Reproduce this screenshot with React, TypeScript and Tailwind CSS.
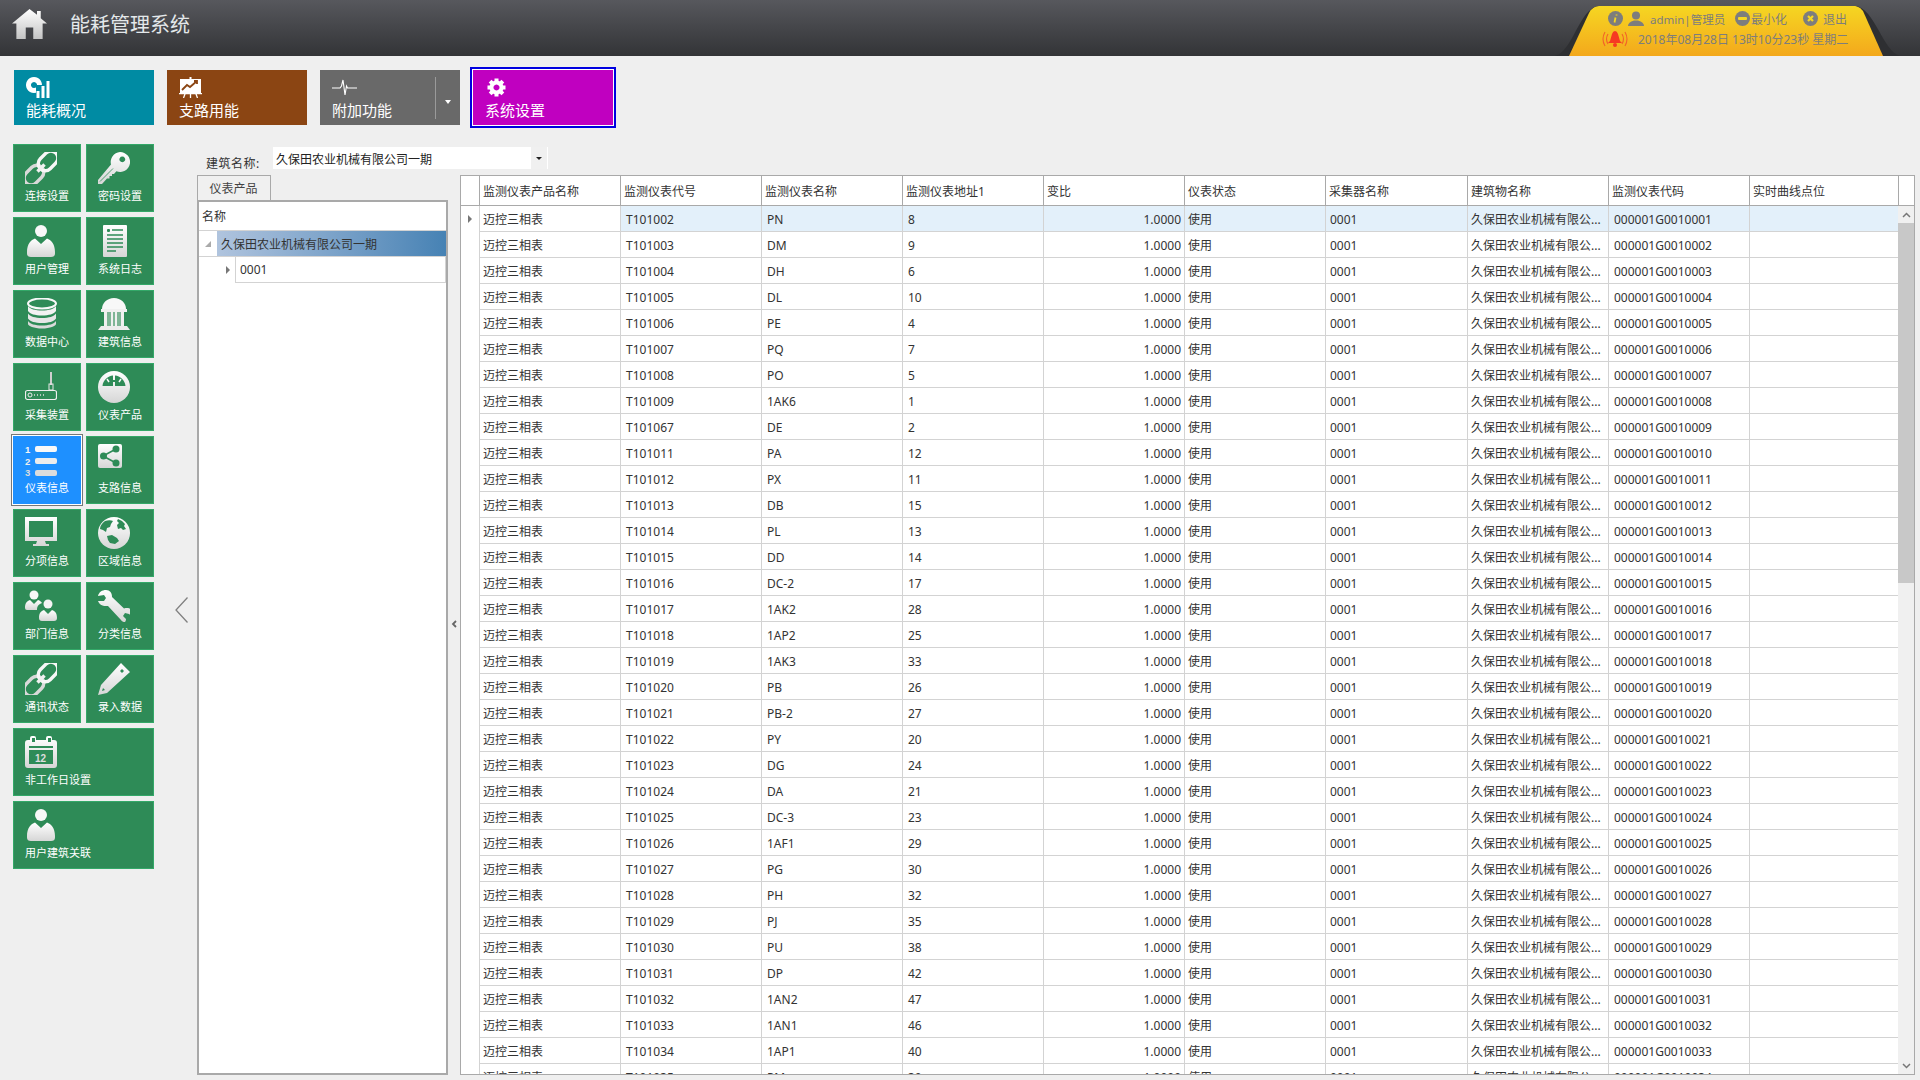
import React from "react";

const G = "url(#g)";
const TILE = "#2e8b57";

const Link = () => (
  <svg width="32" height="32" viewBox="0 0 32 32" className="block">
    <g transform="rotate(-45 16 16)" fill="none" strokeWidth="3.400">
      <rect x="-5" y="9" width="22" height="14" rx="7" stroke="#d9d9d9" />
      <rect x="15" y="9" width="22" height="14" rx="7" stroke="#f7f7f7" />
      <path d="M11 16h10" stroke="#f0f0f0" />
    </g>
  </svg>
);
const Key = () => (
  <svg width="32" height="32" viewBox="0 0 32 32" className="block">
    <path fill={G} fillRule="evenodd" d="M22 0a10 10 0 1 1-3.6 19.3L16 22l-2 0 0 2-2.500 0 0 2.500-2.500 0L4 32H0v-4L13 12.500A10 10 0 0 1 22 0Zm2.300 4.500a2.900 2.900 0 1 0 .01 0Z" />
    <path d="M2 29.500 15 16.500" stroke={TILE} strokeWidth="0.8" />
  </svg>
);
const User = () => (
  <svg width="32" height="32" viewBox="0 0 32 32" className="block">
    <circle cx="16" cy="6" r="6" fill="#f8f8f8" />
    <path fill={G} d="M2 27c0-8 4-12 8-13.500L16 19l6-5.500c4 1.500 8 5.500 8 13.500v1.500Q30 32 26 32H6q-4 0-4-3.500Z" />
  </svg>
);
const Doc = () => (
  <svg width="32" height="32" viewBox="0 0 32 32" className="block">
    <rect x="5" y="0" width="24" height="32" rx="1" fill={G} />
    <rect x="9" y="4" width="3" height="3" rx="1" fill={TILE} />
    <path d="M14 5h11M9 10h16M9 14h16M9 18h16M9 22h16M9 26h9" stroke={TILE} strokeWidth="1.5" />
  </svg>
);
const Db = () => (
  <svg width="32" height="32" viewBox="0 0 32 32" className="block">
    <ellipse cx="17" cy="5.500" rx="14" ry="5" fill="none" stroke="#f8f8f8" strokeWidth="2" />
    <path fill="#f2f2f2" d="M3 8c2 3 7 4.500 14 4.500S29 11 31 8v5c-2 3-7 4.500-14 4.500S5 16 3 13Z" />
    <path fill="#e6e6e6" d="M3 15.500c2 3 7 4.500 14 4.500s12-1.500 14-4.500v5c-2 3-7 4.500-14 4.500S5 23.500 3 20.500Z" />
    <path fill="#dadada" d="M3 23c2 3 7 4.500 14 4.500S29 26 31 23v3c0 2-6 4.500-14 4.500S3 28 3 26Z" />
  </svg>
);
const Bank = () => (
  <svg width="32" height="32" viewBox="0 0 32 32" className="block">
    <path fill="#f8f8f8" d="M4 11C4 5 9 0 16 0s12 5 12 11Z" />
    <rect x="3" y="11" width="26" height="3" fill="#f0f0f0" />
    <path fill="#cfe0d6" d="M6 14h20v14H6Z" opacity="0.5" />
    <path fill="#f0f0f0" d="M6 14h3v14H6ZM13 14h2v14h-2ZM17 14h2v14h-2ZM23 14h3v14h-3Z" />
    <path fill="#ececec" d="M3 28h26l3 4H0Z" />
  </svg>
);
const Router = () => (
  <svg width="32" height="32" viewBox="0 0 32 32" className="block">
    <rect x="25" y="1" width="2" height="13" fill="#cfcfcf" />
    <rect x="24" y="13" width="4" height="6" fill="none" stroke="#e8e8e8" />
    <rect x="0.500" y="19.500" width="31" height="9" rx="2" fill="none" stroke="#efefef" strokeWidth="1.2" />
    <circle cx="5" cy="24" r="2" fill="none" stroke="#efefef" />
    <path d="M9 24h1M12 24h1M15 24h1M18 24h1" stroke="#e0e0e0" strokeWidth="1.4" />
  </svg>
);
const Gauge = () => (
  <svg width="32" height="32" viewBox="0 0 32 32" className="block">
    <circle cx="16" cy="16" r="16" fill={G} />
    <path fill={TILE} d="M4.500 15C5 9 10 5 15 4.500V9h2V4.500C22 5 27 9 27.500 15H17v-4h-2v4Z" />
    <path d="M9 8l2 3M23 8l-2 3" stroke="#f8f8f8" strokeWidth="1.5" />
  </svg>
);
const NumList = () => (
  <svg width="32" height="32" viewBox="0 0 32 32" className="block">
    <text x="0" y="8.500" fontSize="9.500" fontWeight="700" fill="#f5f5f5" fontFamily="'Liberation Sans', sans-serif">1</text>
    <text x="0" y="20.500" fontSize="9.500" fontWeight="700" fill="#eeeeee" fontFamily="'Liberation Sans', sans-serif">2</text>
    <text x="0" y="31.500" fontSize="9.500" fontWeight="700" fill="#dddddd" fontFamily="'Liberation Sans', sans-serif">3</text>
    <rect x="10" y="2" width="22" height="6" rx="2" fill="#f8f8f8" />
    <rect x="10" y="14" width="22" height="6" rx="2" fill="#ececec" />
    <rect x="10" y="26" width="22" height="6" rx="2" fill="#dcdcdc" />
  </svg>
);
const Share = () => (
  <svg width="32" height="32" viewBox="0 0 32 32" className="block">
    <rect x="0" y="0" width="24" height="24" rx="2" fill={G} />
    <path d="M5 12 18 5M5 12l13 7" stroke={TILE} strokeWidth="1.5" />
    <circle cx="5.500" cy="12" r="3.500" fill={TILE} />
    <circle cx="18" cy="5" r="3.500" fill={TILE} />
    <circle cx="18" cy="19" r="3.500" fill={TILE} />
  </svg>
);
const Monitor = () => (
  <svg width="32" height="32" viewBox="0 0 32 32" className="block">
    <path fill={G} fillRule="evenodd" d="M0 0h32v24H20l1 3h3v2H8v-2h3l1-3H0Zm4 4v16h24V4Z" />
  </svg>
);
const Globe = () => (
  <svg width="32" height="32" viewBox="0 0 32 32" className="block">
    <circle cx="16" cy="16" r="16" fill={G} />
    <path fill={TILE} d="M7 4c3-1 6-1 8 0l-2 3-1 3-3 1-1 4-3-2-3-1c0-3 2-6 5-8ZM20 2l4 2 3 3-1 2 2 3-3 1-2-2-3 1-1-4 2-2-2-2ZM9 19l5-1 5 3 2 3-4 3-5-1-2-3Z" />
  </svg>
);
const Group = () => (
  <svg width="32" height="32" viewBox="0 0 32 32" className="block">
    <circle cx="9" cy="5" r="4.500" fill="#f8f8f8" />
    <path fill={G} d="M0 18c0-5 2-7 5-8l4 4 4-4c2 .6 3 1.500 4 3-3 1-5 3-5 6v1H2q-2 0-2-2Z" />
    <circle cx="23" cy="14" r="4.500" fill="#f4f4f4" />
    <path fill={G} d="M14 28c0-5 2-7 5-8l4 4 4-4c3 1 5 3 5 8q0 3-3 3H17q-3 0-3-3Z" />
  </svg>
);
const Wrench = () => (
  <svg width="32" height="32" viewBox="0 0 32 32" className="block">
    <path fill={G} d="M8 0c-4 0-7 2-8 6l6-1 2 3-2 3-6 0c1 3 4 5 8 5h2l13 14c1 1.500 2 2 4 2 0 0 1-1 1-3l-3-3 2-3 4 1 4 3c1-4-1-8-5-9-2 0-3 0-4 .5L14 7c0-4-2-7-6-7Z" />
  </svg>
);
const Pencil = () => (
  <svg width="32" height="32" viewBox="0 0 32 32" className="block">
    <path fill={G} fillRule="evenodd" d="M23 0 32 9 9 30 0 32 3 22Zm1 6-2 2 2 2 2-2ZM5 25l-1 3 3-1Z" />
  </svg>
);
const Calendar = () => (
  <svg width="32" height="32" viewBox="0 0 32 32" className="block">
    <path fill={G} d="M3 4h2V2q0-2 2-2h2q2 0 2 2v2h10V2q0-2 2-2h2q2 0 2 2v2h2q3 0 3 3v22q0 3-3 3H3q-3 0-3-3V7q0-3 3-3Z" />
    <rect x="7" y="2" width="3" height="4" fill={TILE} />
    <rect x="23" y="2" width="3" height="4" fill={TILE} />
    <rect x="4" y="10" width="24" height="2" fill={TILE} />
    <rect x="4" y="14" width="24" height="14" fill={TILE} />
    <text x="10" y="26" fontSize="10" fontWeight="700" fill="#dddddd" fontFamily="'Liberation Sans', sans-serif">12</text>
  </svg>
);

const tiles: { label: string; icon: React.ReactNode; wide?: boolean; sel?: boolean }[] = [
  { label: "连接设置", icon: <Link /> },
  { label: "密码设置", icon: <Key /> },
  { label: "用户管理", icon: <User /> },
  { label: "系统日志", icon: <Doc /> },
  { label: "数据中心", icon: <Db /> },
  { label: "建筑信息", icon: <Bank /> },
  { label: "采集装置", icon: <Router /> },
  { label: "仪表产品", icon: <Gauge /> },
  { label: "仪表信息", icon: <NumList />, sel: true },
  { label: "支路信息", icon: <Share /> },
  { label: "分项信息", icon: <Monitor /> },
  { label: "区域信息", icon: <Globe /> },
  { label: "部门信息", icon: <Group /> },
  { label: "分类信息", icon: <Wrench /> },
  { label: "通讯状态", icon: <Link /> },
  { label: "录入数据", icon: <Pencil /> },
  { label: "非工作日设置", icon: <Calendar />, wide: true },
  { label: "用户建筑关联", icon: <User />, wide: true },
];

const rowsRaw = "T101002 PN 8,T101003 DM 9,T101004 DH 6,T101005 DL 10,T101006 PE 4,T101007 PQ 7,T101008 PO 5,T101009 1AK6 1,T101067 DE 2,T101011 PA 12,T101012 PX 11,T101013 DB 15,T101014 PL 13,T101015 DD 14,T101016 DC-2 17,T101017 1AK2 28,T101018 1AP2 25,T101019 1AK3 33,T101020 PB 26,T101021 PB-2 27,T101022 PY 20,T101023 DG 24,T101024 DA 21,T101025 DC-3 23,T101026 1AF1 29,T101027 PG 30,T101028 PH 32,T101029 PJ 35,T101030 PU 38,T101031 DP 42,T101032 1AN2 47,T101033 1AN1 46,T101034 1AP1 40,T101035 PM 30";
const rows = rowsRaw.split(",").map((r) => r.split(" "));

const widths = ["w-[141px]", "w-[141px]", "w-[141px]", "w-[141px]", "w-[141px]", "w-[141px]", "w-[142px]", "w-[141px]", "w-[141px]", "w-[149px]"];
const heads = ["监测仪表产品名称", "监测仪表代号", "监测仪表名称", "监测仪表地址1", "变比", "仪表状态", "采集器名称", "建筑物名称", "监测仪表代码", "实时曲线点位"];

const Cell = ({ i, right, bg, children }: { i: number; right?: boolean; bg?: string; children?: React.ReactNode }) => (
  <div className={`${widths[i]} ${bg ?? ""} ${i === 0 || i === 5 || i === 7 ? "pl-[3px]" : i === 6 ? "pl-[4px]" : "pl-[5px]"} shrink-0 h-full border-l border-b border-[#d3d3d3] pr-[3px] pt-[3px] flex items-center whitespace-nowrap overflow-hidden ${right ? "justify-end" : ""}`}>
    {children}
  </div>
);

export default function App() {
  return (
    <div className="w-[1920px] h-[1080px] overflow-hidden flex flex-col bg-[#efefef] text-[12px] text-[#333333] font-['Noto_Sans','Noto_Sans_CJK_SC',sans-serif]">
      <svg className="block w-0 h-0">
        <defs>
          <linearGradient id="g" x1="0" y1="0" x2="0" y2="1">
            <stop offset="0" stopColor="#ffffff" />
            <stop offset="1" stopColor="#d6d6d6" />
          </linearGradient>
          <linearGradient id="h" x1="0" y1="0" x2="0" y2="1">
            <stop offset="0" stopColor="#ffffff" />
            <stop offset="1" stopColor="#c4c4c4" />
          </linearGradient>
        </defs>
      </svg>

      {/* top bar */}
      <div className="h-[56px] shrink-0 flex bg-gradient-to-b from-[#57585d] to-[#333437]">
        <div className="pl-[12px] pt-[9px] w-[70px] shrink-0">
          <svg width="35" height="30" viewBox="0 0 28 29" preserveAspectRatio="none" className="block">
            <path fill="url(#h)" d="M14 0 20 5.500V2h3v7l5 5h-3.500v15H17V18h-6v11H3.500V14H0Z" />
          </svg>
        </div>
        <div className="pt-[11px] text-[20px] leading-[28px] text-[#e4e8ea] whitespace-nowrap">能耗管理系统</div>
        <div className="ml-auto mr-[20px] w-[345px] h-[56px] bg-[#2e2f32] [clip-path:path('M0_56C18_52_24_8_44_6H300C320_8_328_52_345_56Z')]">
          <div className="ml-[14px] mt-[5px] w-[314px] h-[51px] bg-gradient-to-b from-[#f5d722] to-[#f3a81c] [clip-path:path('M0_51L20_8Q24_0_34_0H280Q290_0_294_6L314_51Z')] text-[#7d7d7d] pt-[4px]">
            <div className="flex items-center h-[19px] pl-[39px]">
              <svg width="15" height="15" viewBox="0 0 15 15" className="block shrink-0">
                <circle cx="7.500" cy="7.500" r="7.500" fill="#7d7d7d" />
                <path d="M8.500 3.500v1M7.500 6.500 6.500 11.500" stroke="#f5d722" strokeWidth="1.800" />
              </svg>
              <svg width="16" height="16" viewBox="0 0 16 16" className="block shrink-0 ml-[5px]">
                <circle cx="8" cy="4.500" r="4" fill="#7d7d7d" />
                <path d="M0 15q0-4 6-5.500h4q6 1.500 6 5.500Z" fill="#7d7d7d" />
              </svg>
              <span className="ml-[6px] w-[79px] shrink-0 whitespace-nowrap text-[11.500px] leading-[22px] h-[19px]">admin|管理员</span>
              <svg width="15" height="15" viewBox="0 0 15 15" className="block shrink-0 ml-[6px]">
                <circle cx="7.500" cy="7.500" r="7.500" fill="#7d7d7d" />
                <rect x="3" y="6" width="9" height="3" rx="1" fill="#f5d722" />
              </svg>
              <span className="w-[52px] shrink-0 whitespace-nowrap ml-[1px] leading-[22px] h-[19px]">最小化</span>
              <svg width="15" height="15" viewBox="0 0 15 15" className="block shrink-0">
                <circle cx="7.500" cy="7.500" r="7.500" fill="#7d7d7d" />
                <path d="M5 5l5 5M10 5l-5 5" stroke="#f5d722" strokeWidth="2.200" />
              </svg>
              <span className="ml-[5px] whitespace-nowrap leading-[22px] h-[19px]">退出</span>
            </div>
            <div className="flex items-center h-[20px] mt-[1px] pl-[31px]">
              <svg width="30" height="18" viewBox="0 0 30 18" className="block shrink-0">
                <path d="M15 1q2 0 3 3l2 7 2 2H8l2-2 2-7q1-3 3-3Z" fill="#f63a22" />
                <circle cx="15" cy="15" r="2" fill="#f63a22" />
                <path d="M5 2Q1 9 5 16M8 4Q5 9 8 14M25 2Q29 9 25 16M22 4Q25 9 22 14" fill="none" stroke="#f2622a" strokeWidth="1.100" />
              </svg>
              <span className="ml-[8px] whitespace-nowrap leading-[22px] h-[20px]">2018年08月28日 13时10分23秒 星期二</span>
            </div>
          </div>
        </div>
      </div>

      {/* toolbar */}
      <div className="h-[88px] shrink-0 flex pt-[14px] pl-[14px] text-[15px] leading-[18px] text-white">
        <div className="w-[140px] h-[55px] bg-[#008ba3] pl-[12px] pt-[7px]">
          <svg width="24" height="21" viewBox="0 0 24 21" className="block">
            <path fillRule="evenodd" fill="#ffffff" d="M8 0a8 8 0 1 1-.01 0Zm0 5a3 3 0 1 0 .01 0Z" />
            <rect x="10" y="8" width="14" height="13" fill="#008ba3" />
            <rect x="10.500" y="14" width="3" height="7" fill="#ffffff" />
            <rect x="15.500" y="9" width="3" height="12" fill="#ffffff" />
            <rect x="20.500" y="4" width="3" height="17" fill="#ffffff" />
          </svg>
          <div className="mt-[3px] whitespace-nowrap">能耗概况</div>
        </div>
        <div className="ml-[13px] w-[140px] h-[55px] bg-[#8b4513] pl-[12px] pt-[7px]">
          <svg width="23" height="21" viewBox="0 0 23 21" className="block">
            <rect x="10.500" y="0" width="2" height="2" fill="#fff" />
            <rect x="1" y="2" width="21" height="14" fill="#fff" />
            <path d="M3 13 8 8l3 2 7-6M15 4h3v3" fill="none" stroke="#8b4513" strokeWidth="1.800" />
            <path d="M0 16.700h23M6 17 4.500 21M17 17l1.500 4M11.500 17v4" stroke="#fff" strokeWidth="1.300" />
          </svg>
          <div className="mt-[3px] whitespace-nowrap">支路用能</div>
        </div>
        <div className="ml-[13px] w-[140px] h-[55px] bg-[#696969] flex">
          <div className="w-[115px] h-full pl-[12px] pt-[7px]">
            <svg width="25" height="21" viewBox="0 0 25 21" className="block">
              <path d="M0 11h8l1.500-2 1.500-6 2 15 1.500-9 1 2H25" fill="none" stroke="#fff" strokeWidth="1.100" />
            </svg>
            <div className="mt-[3px] whitespace-nowrap">附加功能</div>
          </div>
          <div className="mt-[7px] h-[42px] border-l border-[#9a9a9a] w-[25px] flex items-center justify-center">
            <div className="pt-[8px]">
              <div className="w-0 h-0 border-x-[3.500px] border-x-transparent border-t-[4px] border-t-white" />
            </div>
          </div>
        </div>
        <div className="ml-[10px] -mt-[3px] w-[146px] h-[61px] border-2 border-[#0000e0] p-px bg-white">
          <div className="w-[140px] h-[55px] bg-[#c000c0] pl-[12px] pt-[7px]">
            <svg width="23" height="21" viewBox="0 0 20 21" className="block">
              <g fill="#fff">
                <path fillRule="evenodd" d="M10 3.500a7 7 0 1 1-.01 0Zm0 4a3 3 0 1 0 .01 0Z" />
                <rect x="8" y="1.500" width="4" height="4" />
                <rect x="8" y="15.500" width="4" height="4" />
                <rect x="1" y="8.500" width="4" height="4" />
                <rect x="15" y="8.500" width="4" height="4" />
                <rect x="8" y="1.500" width="4" height="4" transform="rotate(45 10 10.500)" />
                <rect x="8" y="1.500" width="4" height="4" transform="rotate(135 10 10.500)" />
                <rect x="8" y="1.500" width="4" height="4" transform="rotate(225 10 10.500)" />
                <rect x="8" y="1.500" width="4" height="4" transform="rotate(315 10 10.500)" />
              </g>
            </svg>
            <div className="mt-[3px] whitespace-nowrap">系统设置</div>
          </div>
        </div>
      </div>

      {/* main */}
      <div className="flex-1 min-h-0 flex">
        <div className="w-[154px] shrink-0 pl-[13px]">
          <div className="grid grid-cols-[68px_68px] auto-rows-[68px] gap-[5px]">
            {tiles.map((t) => (
              <div
                key={t.label}
                className={`${t.wide ? "col-span-2" : ""} ${t.sel ? "bg-[#1e90ff] border-[#1e90ff] shadow-[0_0_0_1px_#ffffff,0_0_0_2px_#777777]" : "bg-[#2e8b57] border-[#33a868]"} border pl-[11px] pt-[7px]`}
              >
                {t.icon}
                <div className="mt-[5px] h-[14px] leading-[14px] text-[11px] text-white whitespace-nowrap">{t.label}</div>
              </div>
            ))}
          </div>
        </div>

        <div className="w-[43px] shrink-0 h-[931px] flex items-center pl-[21px]">
          <svg width="13" height="26" viewBox="0 0 13 26" className="block">
            <path d="M12.500 0.500 1 13 12.500 25.500" fill="none" stroke="#808080" strokeWidth="1.300" />
          </svg>
        </div>

        <div className="flex-1 min-w-0 flex flex-col">
          <div className="h-[31px] shrink-0 flex pt-[3px]">
            <div className="w-[76px] pl-[9px] pt-[7px] leading-[20px] whitespace-nowrap tracking-[0.5px]">建筑名称:</div>
            <div className="w-[275px] h-[22px] bg-white flex">
              <div className="flex-1 pl-[3px] text-[12px] leading-[25px] h-[22px] text-[#222222] whitespace-nowrap overflow-hidden">久保田农业机械有限公司一期</div>
              <div className="w-[16px] h-full bg-[#f0f0f0] flex items-center justify-center">
                <div className="w-0 h-0 border-x-[3px] border-x-transparent border-t-[3px] border-t-[#222222]" />
              </div>
              <div className="w-px" />
            </div>
          </div>

          <div className="flex h-[900px]">
            {/* left tree */}
            <div className="w-[251px] shrink-0 flex flex-col">
              <div className="h-[25px] w-[74px] border-t border-x border-[#a9a9a9] bg-[#f0f0f0] text-center leading-[26px] pr-[1px] text-[#444444] shrink-0">仪表产品</div>
              <div className="flex-1 border-2 border-[#a9a9a9] bg-white">
                <div className="h-[29px] pl-[3px] leading-[30px] border-b border-[#d3d3d3]">名称</div>
                <div className="flex h-[26px] border-b border-[#d3d3d3]">
                  <div className="w-[18px] flex items-center justify-center">
                    <div className="w-0 h-0 border-l-[6px] border-l-transparent border-b-[6px] border-b-[#aaaaaa]" />
                  </div>
                  <div className="flex-1 bg-gradient-to-r from-[#b0c4de] to-[#4682b4] pl-[4px] leading-[27px] whitespace-nowrap">久保田农业机械有限公司一期</div>
                </div>
                <div className="flex h-[26px]">
                  <div className="w-[36px] flex items-center justify-center pl-[24px] pr-[3px]">
                    <div className="w-0 h-0 border-y-[4px] border-y-transparent border-l-[4px] border-l-[#777777]" />
                  </div>
                  <div className="flex-1 border-l border-b border-r border-[#d3d3d3] pl-[4px] leading-[25px]">0001</div>
                </div>
              </div>
            </div>

            {/* splitter */}
            <div className="w-[12px] shrink-0 flex items-center justify-center pb-[2px]">
              <svg width="6" height="8" viewBox="0 0 6 8" className="block">
                <path d="M5 1 2 4l3 3" fill="none" stroke="#666666" strokeWidth="1.800" />
              </svg>
            </div>

            {/* grid */}
            <div className="w-[1455px] shrink-0 h-[900px] border border-[#a9a9a9] bg-white flex flex-col overflow-hidden">
              <div className="h-[30px] shrink-0 flex border-b border-[#a9a9a9]">
                <div className="w-[18px] shrink-0" />
                {heads.map((h, i) => (
                  <div key={h} className={`${widths[i]} shrink-0 border-l border-[#a9a9a9] pl-[3px] leading-[31px] h-[29px] whitespace-nowrap`}>{h}</div>
                ))}
                <div className="border-l border-[#a9a9a9] flex-1" />
              </div>
              <div className="flex-1 min-h-0 flex">
                <div className="w-[1437px] shrink-0 overflow-hidden">
                  {rows.map((r, i) => {
                    const bg = i === 0 ? "bg-[#e3f0fa]" : "";
                    const code = "000001G00100" + String(i + 1).padStart(2, "0");
                    return (
                      <div key={r[0]} className="flex h-[26px]">
                        <div className="w-[18px] shrink-0 flex items-center justify-center">
                          {i === 0 && <div className="w-0 h-0 border-y-[4px] border-y-transparent border-l-[4px] border-l-[#777777]" />}
                        </div>
                        <Cell i={0}>迈控三相表</Cell>
                        <Cell i={1} bg={bg}>{r[0]}</Cell>
                        <Cell i={2} bg={bg}>{r[1]}</Cell>
                        <Cell i={3} bg={bg}>{r[2]}</Cell>
                        <Cell i={4} bg={bg} right>1.0000</Cell>
                        <Cell i={5} bg={bg}>使用</Cell>
                        <Cell i={6} bg={bg}>0001</Cell>
                        <Cell i={7} bg={bg}>久保田农业机械有限公...</Cell>
                        <Cell i={8} bg={bg}>{code}</Cell>
                        <Cell i={9} bg={bg} />
                      </div>
                    );
                  })}
                </div>
                <div className="w-[16px] shrink-0 bg-[#f0f0f0] flex flex-col">
                  <div className="h-[17px] flex items-center justify-center shrink-0">
                    <svg width="9" height="6" viewBox="0 0 9 6" className="block">
                      <path d="M1 5l3.500-3.500L8 5" fill="none" stroke="#777777" strokeWidth="1.500" />
                    </svg>
                  </div>
                  <div className="h-[360px] bg-[#c8c8c8] shrink-0" />
                  <div className="flex-1" />
                  <div className="h-[17px] flex items-center justify-center shrink-0">
                    <svg width="9" height="6" viewBox="0 0 9 6" className="block">
                      <path d="M1 1l3.500 3.500L8 1" fill="none" stroke="#777777" strokeWidth="1.500" />
                    </svg>
                  </div>
                </div>
              </div>
            </div>
          </div>
        </div>
      </div>
    </div>
  );
}
